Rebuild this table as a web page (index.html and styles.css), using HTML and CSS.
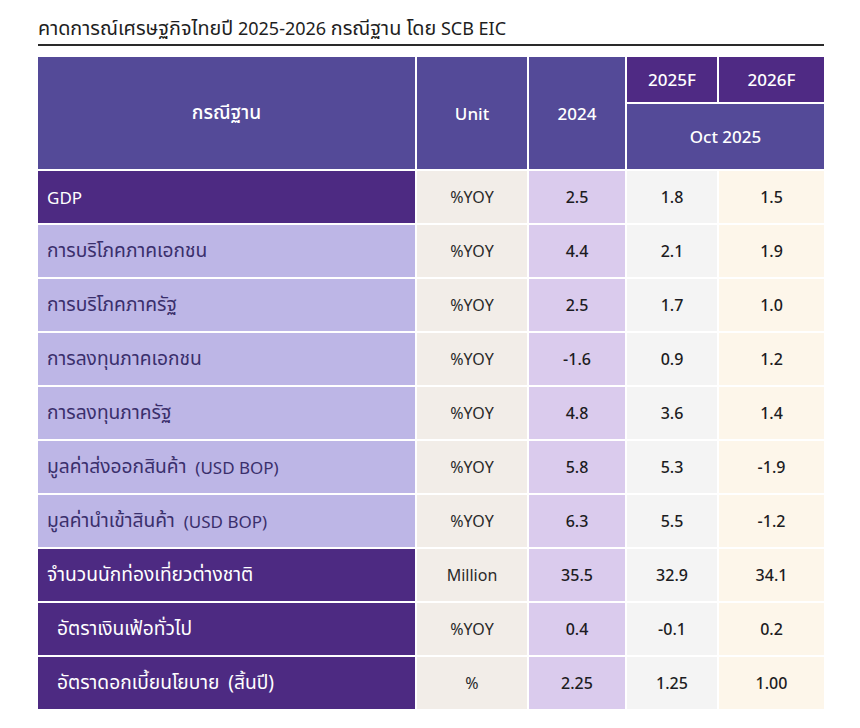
FILE: index.html
```html
<!DOCTYPE html>
<html lang="th">
<head>
<meta charset="utf-8">
<title>คาดการณ์เศรษฐกิจไทย</title>
<link rel="stylesheet" href="styles.css">
</head>
<body>
<div class="page">
  <h1 class="title"><span class="th">คาดการณ์เศรษฐกิจไทยปี</span> 2025-2026 <span class="th">กรณีฐาน โดย</span> SCB EIC</h1>
  <div class="rule"></div>
  <div class="grid">
    <div class="h h-main span2"><span class="th">กรณีฐาน</span></div>
    <div class="h h-main span2">Unit</div>
    <div class="h h-main span2">2024</div>
    <div class="h h-dark">2025F</div>
    <div class="h h-dark">2026F</div>
    <div class="h h-main wide">Oct 2025</div>

    <div class="lbl dark">GDP</div>
    <div class="c unit">%YOY</div><div class="c y24">2.5</div><div class="c y25">1.8</div><div class="c y26">1.5</div>

    <div class="lbl light"><span class="th">การบริโภคภาคเอกชน</span></div>
    <div class="c unit">%YOY</div><div class="c y24">4.4</div><div class="c y25">2.1</div><div class="c y26">1.9</div>

    <div class="lbl light"><span class="th">การบริโภคภาครัฐ</span></div>
    <div class="c unit">%YOY</div><div class="c y24">2.5</div><div class="c y25">1.7</div><div class="c y26">1.0</div>

    <div class="lbl light"><span class="th">การลงทุนภาคเอกชน</span></div>
    <div class="c unit">%YOY</div><div class="c y24">-1.6</div><div class="c y25">0.9</div><div class="c y26">1.2</div>

    <div class="lbl light"><span class="th">การลงทุนภาครัฐ</span></div>
    <div class="c unit">%YOY</div><div class="c y24">4.8</div><div class="c y25">3.6</div><div class="c y26">1.4</div>

    <div class="lbl light"><span class="th">มูลค่าส่งออกสินค้า</span>&nbsp; (USD BOP)</div>
    <div class="c unit">%YOY</div><div class="c y24">5.8</div><div class="c y25">5.3</div><div class="c y26">-1.9</div>

    <div class="lbl light"><span class="th">มูลค่านำเข้าสินค้า</span>&nbsp; (USD BOP)</div>
    <div class="c unit">%YOY</div><div class="c y24">6.3</div><div class="c y25">5.5</div><div class="c y26">-1.2</div>

    <div class="lbl dark"><span class="th">จำนวนนักท่องเที่ยวต่างชาติ</span></div>
    <div class="c unit">Million</div><div class="c y24">35.5</div><div class="c y25">32.9</div><div class="c y26">34.1</div>

    <div class="lbl dark indent"><span class="th">อัตราเงินเฟ้อทั่วไป</span></div>
    <div class="c unit">%YOY</div><div class="c y24">0.4</div><div class="c y25">-0.1</div><div class="c y26">0.2</div>

    <div class="lbl dark indent"><span class="th">อัตราดอกเบี้ยนโยบาย</span>&nbsp; <span class="th">(สิ้นปี)</span></div>
    <div class="c unit">%</div><div class="c y24">2.25</div><div class="c y25">1.25</div><div class="c y26">1.00</div>
  </div>
</div>
</body>
</html>
```
FILE: styles.css
```css
html, body {
  margin: 0;
  padding: 0;
  background: #ffffff;
}
body {
  font-family: "Noto Sans", "Noto Sans Thai", "Open Sans", sans-serif;
  color: #222;
}
.page {
  padding: 16px 0 0 38px;
  width: 786px;
}
.th {
  font-size: 1.13em;
}
.title {
  margin: 0;
  font-size: 18px;
  font-weight: 400;
  line-height: 24px;
  color: #1e1e1e;
  height: 28px;
  white-space: nowrap;
}
.title .th {
  font-size: 1.1em;
}
.rule {
  height: 2px;
  background: #2a2a2a;
  margin-bottom: 11px;
}
.grid {
  display: grid;
  grid-template-columns: 377px 110px 96px 90px 105px;
  grid-template-rows: 45px 65px repeat(10, 52px);
  column-gap: 2px;
  row-gap: 2px;
  background: #ffffff;
}
.h {
  display: flex;
  align-items: center;
  justify-content: center;
  color: #ffffff;
  font-size: 17px;
  font-weight: 500;
}
.h-main { background: #544a98; }
.h-dark { background: #4f2a84; }
.span2 { grid-row: span 2; }
.wide { grid-column: span 2; }
.lbl {
  display: flex;
  align-items: center;
  padding-left: 9px;
  font-size: 17px;
  white-space: pre;
}
.lbl.dark {
  background: #4d2a82;
  color: #ffffff;
}
.lbl.light {
  background: #bdb6e6;
  color: #3a2f6c;
}
.lbl.indent { padding-left: 19px; }
.c {
  display: flex;
  align-items: center;
  justify-content: center;
  font-size: 16px;
  font-weight: 500;
  color: #1c1c22;
}
.unit {
  background: #f2ede8;
  font-weight: 400;
  color: #2a2a2a;
}
.y24 { background: #dacbed; }
.y25 { background: #f4f4f4; }
.y26 { background: #fdf6ea; }
```
